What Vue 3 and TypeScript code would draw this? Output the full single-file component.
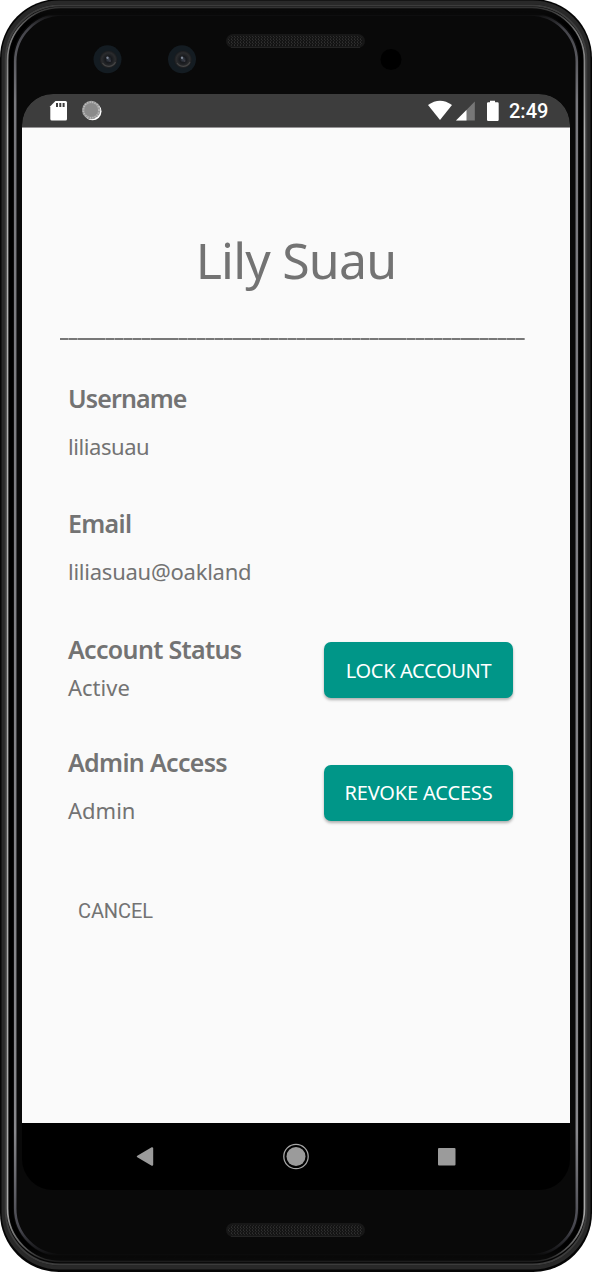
<script setup lang="ts">
interface Field {
  id: string
  label: string
  value: string
  action?: string
}

const fields: Field[] = [
  { id: 'username', label: 'Username', value: 'liliasuau' },
  { id: 'email', label: 'Email', value: 'liliasuau@oakland' },
  { id: 'status', label: 'Account Status', value: 'Active', action: 'LOCK ACCOUNT' },
  { id: 'admin', label: 'Admin Access', value: 'Admin', action: 'REVOKE ACCESS' },
]
</script>

<template>
  <main class="device">
    <svg class="bezel" width="592" height="1276" viewBox="0 0 592 1276" aria-hidden="true">
      <defs>
        <linearGradient id="edge" x1="0" x2="0" y1="0" y2="1">
          <stop offset="0" stop-color="#333" />
          <stop offset="0.02" stop-color="#777" />
          <stop offset="0.1" stop-color="#b0b0b0" />
          <stop offset="0.96" stop-color="#a8a8a8" />
          <stop offset="0.99" stop-color="#555" />
          <stop offset="1" stop-color="#1c1c1c" />
        </linearGradient>
        <linearGradient id="inner" x1="0" x2="0" y1="0" y2="1">
          <stop offset="0" stop-color="#44444a" stop-opacity="0" />
          <stop offset="0.002" stop-color="#44444a" stop-opacity="0.3" />
          <stop offset="0.012" stop-color="#44444a" />
          <stop offset="0.07" stop-color="#77777c" />
          <stop offset="0.9" stop-color="#88888c" />
          <stop offset="0.98" stop-color="#44444c" />
          <stop offset="0.997" stop-color="#33333a" stop-opacity="0.3" />
          <stop offset="1" stop-color="#33333a" stop-opacity="0" />
        </linearGradient>
        <linearGradient id="groove" x1="0" x2="0" y1="0" y2="1">
          <stop offset="0" stop-color="#000" stop-opacity="0" />
          <stop offset="0.01" stop-color="#000" />
          <stop offset="0.99" stop-color="#000" />
          <stop offset="1" stop-color="#000" stop-opacity="0" />
        </linearGradient>
        <pattern id="mesh" width="3" height="3" patternUnits="userSpaceOnUse">
          <rect width="3" height="3" fill="#141414" />
          <rect width="1" height="1" fill="#303030" />
          <rect x="1" y="1" width="1" height="1" fill="#292929" />
          <rect x="0" y="2" width="1" height="1" fill="#262626" />
        </pattern>
        <radialGradient id="lens">
          <stop offset="0" stop-color="#3e4653" />
          <stop offset="0.35" stop-color="#17191d" />
          <stop offset="0.75" stop-color="#2b2c2e" />
          <stop offset="1" stop-color="#17191c" />
        </radialGradient>
      </defs>
      <rect x="0" y="-1" width="592" height="1273" rx="59" fill="#050505" />
      <rect x="3.500" y="2.500" width="585" height="1265" rx="56" fill="none" stroke="#292929" stroke-width="4" />
      <rect x="5.700" y="5.500" width="580.600" height="1259" rx="54" fill="none" stroke="#3c3c3c" stroke-width="2" />
      <rect x="7.500" y="7.500" width="577" height="1254" rx="53" fill="#090909" stroke="url(#edge)" stroke-width="1.700" />
      <rect x="11" y="10.500" width="570" height="1248" rx="50" fill="none" stroke="url(#groove)" stroke-width="4" />
      <rect x="15.200" y="14.500" width="561.600" height="1241" rx="47" fill="none" stroke="url(#inner)" stroke-width="2.500" />
      <rect x="226" y="34" width="139" height="14" rx="7" fill="#171717" />
      <rect x="228" y="36" width="135" height="10" rx="5" fill="url(#mesh)" />
      <path d="M231 47.500H360" stroke="#242424" />
      <rect x="226" y="1223" width="139" height="14" rx="7" fill="#171717" />
      <rect x="228" y="1225" width="135" height="10" rx="5" fill="url(#mesh)" />
      <path d="M231 1236.500H360" stroke="#242424" />
      <g v-for="x in [107.5, 182]" :key="x">
        <circle :cx="x" cy="59.300" r="14" fill="#141c22" />
        <circle :cx="x + 1" cy="59.500" r="9" fill="url(#lens)" />
        <path :d="`M${x - 5} 63A7.500 7.500 0 0 0 ${x + 8} 62`" fill="none" stroke="#454545" stroke-width="1.200" />
        <circle :cx="x" cy="57.800" r="1.200" fill="#7d8594" />
        <circle :cx="x + 2.500" cy="61" r="1" fill="#3d3d46" />
      </g>
      <circle cx="391" cy="59.500" r="10.500" fill="#000" />
    </svg>

    <section class="screen">
      <header class="status-bar">
        <svg width="548" height="34" viewBox="22 94 548 34" aria-hidden="true">
          <path d="M55.500 101H65.500Q67 101 67 102.500V119Q67 120.500 65.500 120.500H51.800Q50.300 120.500 50.300 119V106.200Z" fill="#fff" />
          <path d="M57 103v4M60.300 103v4M63.600 103v4" stroke="#3d3d3d" stroke-width="2" />
          <circle cx="92.500" cy="111.300" r="9" fill="#fff" />
          <circle cx="91.200" cy="110" r="9.200" fill="#999" />
          <circle cx="91.200" cy="110" r="7.800" fill="none" stroke="#c0c0c0" stroke-width="1.800" stroke-dasharray="1 1.500" />
          <circle cx="91.200" cy="110" r="6.800" fill="#8b8b8b" />
          <path d="M428 105Q440 96.300 452 105L440 120Z" fill="#fff" />
          <path d="M474.800 101.500V120.500H456Z" fill="#777" />
          <path d="M466.500 110V120.500H456Z" fill="#fff" />
          <path d="M490 102.300V100.700H495V102.300H497.500Q498.700 102.300 498.700 103.500V119.800Q498.700 121 497.500 121H488.200Q487 121 487 119.800V103.500Q487 102.300 488.200 102.300Z" fill="#fff" />
        </svg>
        <time class="clock">2:49</time>
      </header>

      <div class="content">
        <h1>Lily Suau</h1>
        <div class="divider"></div>
        <div class="fields">
          <section v-for="field in fields" :key="field.id" class="field" :class="field.id">
            <div class="details">
              <h2>{{ field.label }}</h2>
              <p>{{ field.value }}</p>
            </div>
            <button v-if="field.action" type="button" class="action">{{ field.action }}</button>
          </section>
        </div>
        <button type="button" class="cancel">CANCEL</button>
      </div>

      <nav class="navigation">
        <svg width="548" height="67" viewBox="22 1123 548 67" aria-hidden="true">
          <path d="M137.800 1156.500L152.200 1148.200V1164.800Z" fill="#9b9b9b" stroke="#9b9b9b" stroke-width="2" stroke-linejoin="round" />
          <circle cx="296" cy="1156.500" r="12.200" fill="none" stroke="#a6a6a6" stroke-width="1.300" />
          <circle cx="296" cy="1156.500" r="9.500" fill="#9b9b9b" />
          <rect x="438" y="1148" width="17.500" height="17.500" rx="1" fill="#9b9b9b" />
        </svg>
      </nav>
    </section>
  </main>
</template>

<style>
body {
  margin: 0;
  background: #fff;
}
</style>

<style scoped>
.device {
  position: relative;
  box-sizing: border-box;
  width: 592px;
  height: 1276px;
  padding: 94px 22px 86px;
  font-family: "Noto Sans", sans-serif;
  color: #737373;
}
.bezel {
  position: absolute;
  inset: 0;
}
.screen {
  position: relative;
  display: flex;
  flex-direction: column;
  width: 548px;
  height: 1096px;
}
svg {
  display: block;
}
.status-bar {
  position: relative;
  flex: none;
  box-sizing: border-box;
  height: 34px;
  border-bottom: 1px solid #969496;
  border-radius: 31px 31px 0 0;
  background: #3d3d3d;
  clip-path: inset(0 round 31px 31px 0 0);
}
.clock {
  position: absolute;
  top: 5px;
  left: 487px;
  color: #fff;
  font: 500 20px/24px Roboto, sans-serif;
}
.content {
  display: flex;
  flex: 1;
  flex-direction: column;
  min-height: 0;
  background: #fafafa;
}
h1 {
  margin: 96px 0 0;
  height: 72px;
  font-size: 50px;
  font-weight: 400;
  letter-spacing: -0.8px;
  line-height: 72px;
  text-align: center;
}
.divider {
  height: 2px;
  margin: 42px 45px 0 38px;
  background: repeating-linear-gradient(90deg, #777 0 8.300px, #a2a2a2 8.300px 9.120px);
}
.fields {
  display: flex;
  flex-direction: column;
  padding: 40px 57px 0 46px;
}
.field {
  display: flex;
  justify-content: space-between;
  height: 125px;
}
.email {
  height: 126px;
}
.status {
  height: 113px;
}
.admin {
  height: 124px;
}
.details {
  white-space: nowrap;
}
h2 {
  margin: 0;
  font-size: 25px;
  font-weight: 600;
  letter-spacing: -0.68px;
  line-height: 36px;
}
.username h2 {
  letter-spacing: -0.9px;
}
p {
  margin: 14px 0 0;
  font-size: 22px;
  line-height: 32px;
}
.username p {
  letter-spacing: -0.43px;
}
.email p {
  letter-spacing: -0.24px;
}
.status p {
  margin-top: 4px;
}
button {
  padding: 0;
  border: 0;
  font-family: inherit;
}
.action {
  width: 189px;
  height: 56px;
  margin-top: 11px;
  border-radius: 7px;
  background: #009688;
  box-shadow: 0 2px 3px rgb(0 0 0 / 30%);
  color: #fff;
  font-size: 20px;
  letter-spacing: -0.33px;
  white-space: nowrap;
}
.admin .action {
  margin-top: 21px;
  padding-bottom: 2px;
  letter-spacing: -0.15px;
}
.cancel {
  align-self: flex-start;
  margin: 29px 0 0 56px;
  background: transparent;
  color: #737373;
  font: 400 20px/28px Roboto, sans-serif;
  letter-spacing: -0.1px;
}
.navigation {
  flex: none;
  height: 67px;
  border-radius: 0 0 31px 31px;
  background: #000;
}
</style>
